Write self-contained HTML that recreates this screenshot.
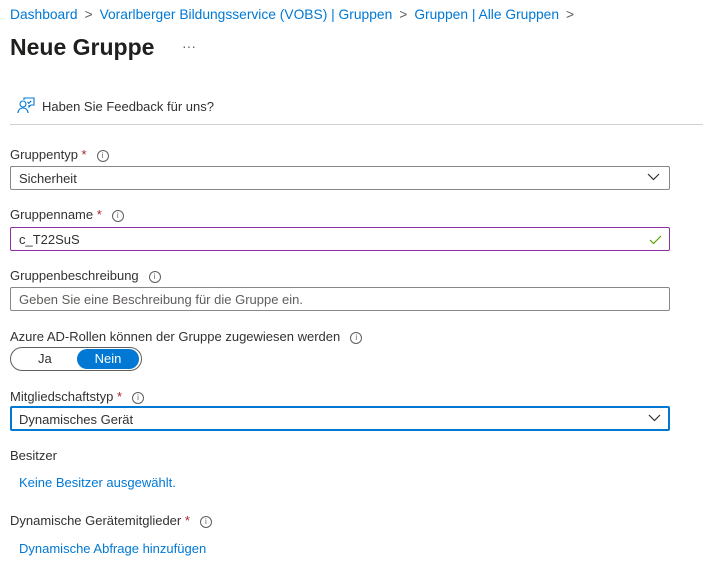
<!DOCTYPE html>
<html><head><meta charset="utf-8"><style>
body{margin:0;width:703px;height:587px;background:#fff;font-family:"Liberation Sans",sans-serif;font-size:13px;color:#323130;position:relative;overflow:hidden}
.a{position:absolute;white-space:nowrap}
.bc{color:#0078d4}
.sep{color:#605e5c;margin:0 7px}
.box{position:absolute;left:10px;width:658px;height:22px;border:1px solid #8a8886;border-radius:2px;box-sizing:content-box}
.box span{position:absolute;left:8px;top:4px}
.req{color:#a4262c}
.i{display:inline-block;width:10px;height:10px;border:1px solid #605e5c;border-radius:50%;font-size:8px;line-height:10px;text-align:center;margin-left:10px;vertical-align:1px;color:#605e5c}
.lnk{color:#0078d4}
</style></head><body>
<div class="a" style="left:10px;top:7px;font-size:13.8px"><span class="bc">Dashboard</span><span class="sep">&gt;</span><span class="bc">Vorarlberger Bildungsservice (VOBS) | Gruppen</span><span class="sep">&gt;</span><span class="bc">Gruppen | Alle Gruppen</span><span class="sep">&gt;</span></div>
<div class="a" style="left:10px;top:34px;font-size:23px;font-weight:bold;color:#201f1e">Neue Gruppe</div>
<div class="a" style="left:182px;top:38px;font-size:14px;color:#605e5c">···</div>
<svg class="a" style="left:17px;top:97px" width="18" height="17" viewBox="0 0 18 17" fill="none" stroke="#0078d4" stroke-width="1.1"><circle cx="6" cy="7" r="3"/><path d="M1 16c0-3 2.2-5 5-5s5 2 5 5"/><path d="M7 3V1h10v7h-3l-2 2V8"/><path d="M10.5 5l1.3 1.3 2.5-2.5"/></svg>
<div class="a" style="left:42px;top:99px">Haben Sie Feedback für uns?</div>
<div class="a" style="left:10px;top:124px;width:693px;height:1px;background:#d0d0d0"></div>

<div class="a" style="left:10px;top:147px">Gruppentyp <span class="req">*</span><span class="i">i</span></div>
<div class="box" style="top:166px"><span>Sicherheit</span>
<svg class="a" style="right:9px;top:6px" width="13" height="8"><path d="M1 1l5.5 5.5L12 1" stroke="#323130" fill="none" stroke-width="1.2"/></svg></div>

<div class="a" style="left:10px;top:207px">Gruppenname <span class="req">*</span><span class="i">i</span></div>
<div class="box" style="top:227px;border-color:#8b2fa8"><span>c_T22SuS</span>
<svg class="a" style="right:7px;top:7px" width="13" height="9"><path d="M1 5l3.5 3.5L12 1" stroke="#57a300" fill="none" stroke-width="1.2"/></svg></div>

<div class="a" style="left:10px;top:268px">Gruppenbeschreibung<span class="i">i</span></div>
<div class="box" style="top:287px"><span style="color:#605e5c">Geben Sie eine Beschreibung für die Gruppe ein.</span></div>

<div class="a" style="left:10px;top:329px">Azure AD-Rollen können der Gruppe zugewiesen werden<span class="i">i</span></div>
<div class="a" style="left:10px;top:347px;width:130px;height:22px;border:1px solid #605e5c;border-radius:12px"></div>
<div class="a" style="left:38px;top:351px">Ja</div>
<div class="a" style="left:77px;top:349px;width:62px;height:20px;background:#0078d4;border-radius:10px;color:#fff;text-align:center;line-height:20px">Nein</div>

<div class="a" style="left:10px;top:389px">Mitgliedschaftstyp <span class="req">*</span><span class="i">i</span></div>
<div class="box" style="top:406px;left:10px;width:656px;height:21px;border:2px solid #0078d4"><span style="left:7px;top:4px">Dynamisches Gerät</span>
<svg class="a" style="right:7px;top:6px" width="13" height="8"><path d="M1 1l5.5 5.5L12 1" stroke="#323130" fill="none" stroke-width="1.2"/></svg></div>

<div class="a" style="left:10px;top:448px">Besitzer</div>
<div class="a lnk" style="left:19px;top:475px">Keine Besitzer ausgewählt.</div>
<div class="a" style="left:10px;top:513px">Dynamische Gerätemitglieder <span class="req">*</span><span class="i">i</span></div>
<div class="a lnk" style="left:19px;top:541px">Dynamische Abfrage hinzufügen</div>
</body></html>
